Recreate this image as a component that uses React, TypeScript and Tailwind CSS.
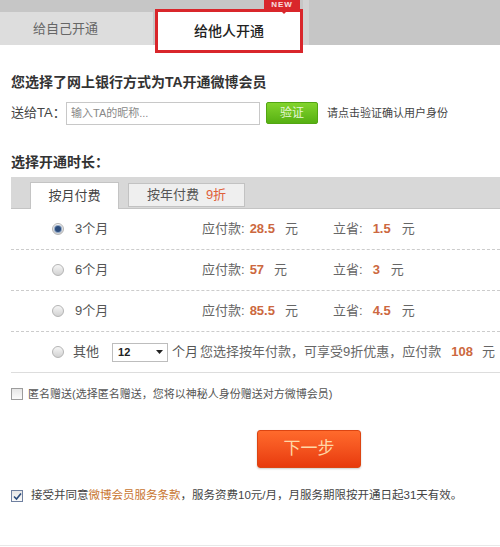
import React from "react";

const ROWS = [
  { label: "3个月", pay: "28.5", save: "1.5", checked: true },
  { label: "6个月", pay: "57", save: "3", checked: false },
  { label: "9个月", pay: "85.5", save: "4.5", checked: false },
];

function Radio({ checked }: { checked?: boolean }) {
  return (
    <span className="flex h-[12px] w-[12px] shrink-0 items-center justify-center rounded-full border border-[#b4b4b4] bg-gradient-to-b from-[#f6f6f6] to-[#d2d2d2]">
      {checked && <span className="h-[6px] w-[6px] rounded-full bg-[#2b4c7c] shadow-[0_0_0_1px_#8fa6c4]" />}
    </span>
  );
}

function CheckBox({ checked }: { checked?: boolean }) {
  return (
    <span className={"flex h-[12px] w-[12px] shrink-0 items-center justify-center border bg-gradient-to-b from-[#e6e6e6] to-[#fbfbfb] " + (checked ? "border-[#6f80a0]" : "border-[#9c9c9c]")}>
      {checked && (
        <svg width="9" height="9" viewBox="0 0 9 9">
          <path d="M1 4.5 L3.5 7 L8 1.5" fill="none" stroke="#2a4a7a" strokeWidth="1.6" />
        </svg>
      )}
    </span>
  );
}

export default function App() {
  return (
    <div className="min-h-[547px] w-[500px] bg-white font-['Liberation_Sans','Noto_Sans_CJK_SC',sans-serif] text-[#333]">
      {/* top tabs */}
      <div className="flex h-[45px] items-end bg-[#c6c6c6]">
        <div className="flex h-[33px] w-[153px] items-center pl-[33px] bg-[#dddddd] text-[13px] text-[#666]">给自己开通</div>
        <div className="relative -mb-[8px] ml-[2px] flex h-[44px] w-[148px] items-center justify-center border-[3px] border-[#d9262b] bg-white text-[14px] font-medium text-[#222]">
          给他人开通
          <span className="absolute -top-[12px] right-[0px] flex h-[10px] w-[36px] items-center justify-center bg-[#d9262b] text-[8px] font-bold leading-none tracking-[1px] text-white/85">
            NEW
            <span className="absolute left-[16px] top-[10px] h-0 w-0 border-x-[4px] border-t-[4px] border-x-transparent border-t-[#d9262b]" />
          </span>
        </div>
        <div className="h-[45px] w-[6px] bg-[#d2d2d2]" />
      </div>

      <div className="pl-[11px]">
        <h2 className="mt-[27px] text-[14px] font-bold leading-[20px] text-[#333]">您选择了网上银行方式为TA开通微博会员</h2>

        <div className="mt-[9px] flex h-[24px] items-center">
          <span className="w-[55px] text-[13px] text-[#444]">送给TA：</span>
          <div className="flex h-[23px] w-[194px] items-center border border-[#c8c8c8] pl-[4px] text-[11px] text-[#888]">输入TA的昵称...</div>
          <button className="ml-[6px] flex h-[22px] w-[52px] items-center justify-center rounded-[2px] border border-[#52a613] bg-gradient-to-b from-[#82d42c] to-[#56b012] text-[12px] text-[#e6f7d6]">验证</button>
          <span className="ml-[9px] text-[11px] text-[#444]">请点击验证确认用户身份</span>
        </div>

        <h2 className="mt-[27px] text-[14px] font-bold leading-[20px] text-[#333]">选择开通时长：</h2>

        {/* period tabs */}
        <div className="mt-[5px] flex h-[32px] items-end border-b border-[#c4c4c4] bg-[#d8d8d8]">
          <div className="-mb-px ml-[19px] flex h-[27px] w-[89px] items-center justify-center border border-b-0 border-[#c4c4c4] bg-white text-[13px] text-[#444]">按月付费</div>
          <div className="mb-[1px] ml-[9px] flex h-[24px] w-[117px] items-center justify-center border border-[#c2c2c2] bg-[#efefef] text-[13px] text-[#555]">
            按年付费<span className="ml-[7px] text-[#e0603a]">9折</span>
          </div>
        </div>

        {/* options */}
        {ROWS.map((r) => (
          <div key={r.label} className="flex h-[41px] items-center border-b border-dashed border-[#cccccc] pl-[41px] text-[13px] text-[#555]">
            <Radio checked={r.checked} />
            <span className="ml-[11px] w-[127px]">{r.label}</span>
            <span className="flex w-[131px] items-center text-[#666]">
              应付款:
              <b className="ml-[5px] text-[#cc6840]">{r.pay}</b>
              <span className="ml-[10px]">元</span>
            </span>
            <span className="flex items-center text-[#666]">
              立省:
              <b className="ml-[10px] text-[#cc6840]">{r.save}</b>
              <span className="ml-[11px]">元</span>
            </span>
          </div>
        ))}
        <div className="flex h-[41px] items-center border-b border-[#dddddd] pl-[41px] text-[13px] text-[#555]">
          <Radio />
          <span className="ml-[9px]">其他</span>
          <div className="ml-[13px] flex h-[19px] w-[56px] items-center justify-between border border-[#bdbdbd] bg-white pl-[5px] pr-[4px] text-[11px] font-bold text-[#222]">
            12
            <svg width="7" height="4" viewBox="0 0 7 4"><path d="M0 0 H7 L3.5 4 Z" fill="#222" /></svg>
          </div>
          <span className="ml-[4px]">个月</span>
          <span className="ml-[2px] text-[#666]">您选择按年付款，可享受9折优惠，应付款</span>
          <b className="ml-[10px] text-[#cc6840]">108</b>
          <span className="ml-[9px] text-[#666]">元</span>
        </div>

        <div className="mt-[13px] flex h-[16px] items-center text-[11px] text-[#555]">
          <CheckBox />
          <span className="ml-[5px]">匿名赠送(选择匿名赠送，您将以神秘人身份赠送对方微博会员)</span>
        </div>

        <button className="ml-[246px] mt-[28px] flex h-[38px] w-[104px] items-center justify-center rounded-[3px] border border-[#dc4512] bg-gradient-to-b from-[#ff6a2c] to-[#e8390c] text-[17px] text-[#ffd7a6] shadow-[0_1px_2px_rgba(0,0,0,0.2)]">
          下一步
        </button>

        <div className="mt-[20px] flex h-[16px] items-center text-[11.5px] text-[#444]">
          <CheckBox checked />
          <span className="ml-[8px]">
            接受并同意<span className="text-[#c8742f]">微博会员服务条款</span>，服务资费10元/月，月服务期限按开通日起31天有效。
          </span>
        </div>
      </div>
      <div className="mt-[41px] h-px bg-[#e8e8e8]" />
    </div>
  );
}
